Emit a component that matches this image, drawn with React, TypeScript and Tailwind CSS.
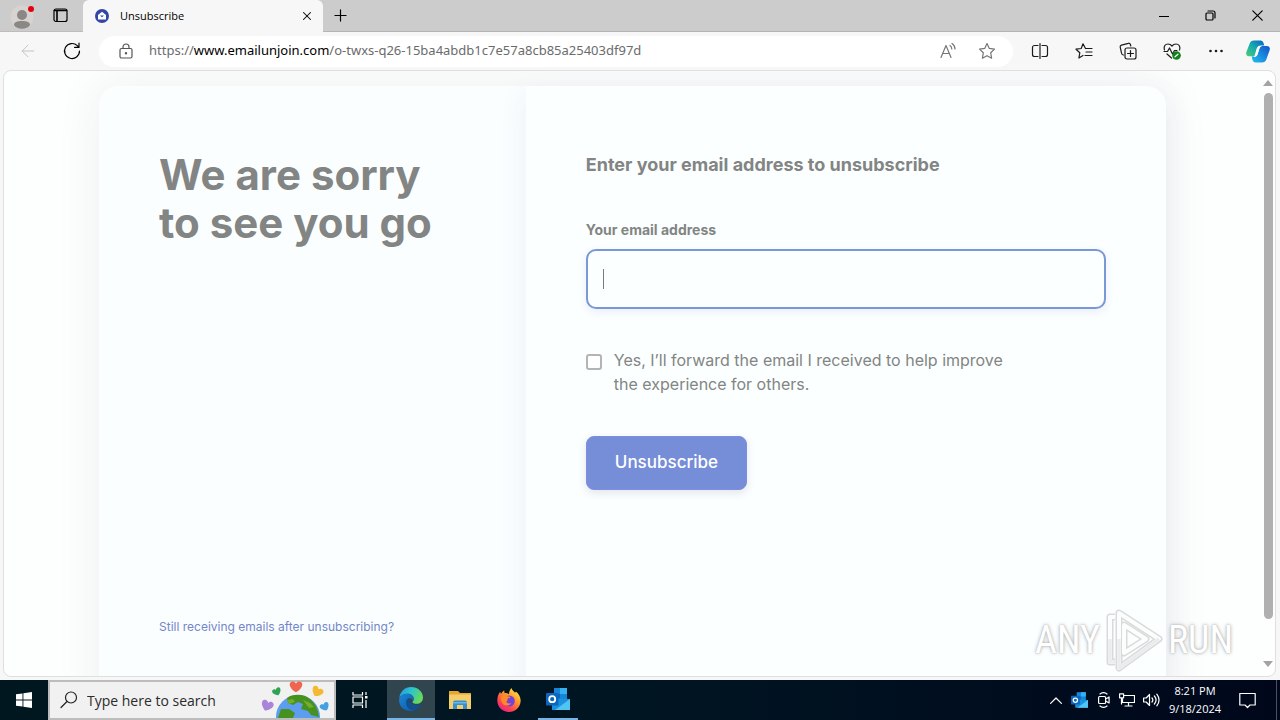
import React from "react";
import { ArrowLeft, Plus, X } from "lucide-react";

const iconProps = {
  fill: "none",
  stroke: "currentColor",
  strokeWidth: 1.2,
  strokeLinecap: "round" as const,
  strokeLinejoin: "round" as const,
  "aria-hidden": true,
};

function Svg({ className, box = "0 0 18 18", children }: { className: string; box?: string; children: React.ReactNode }) {
  return (
    <svg viewBox={box} className={className} {...iconProps}>
      {children}
    </svg>
  );
}

function ProfileIcon() {
  return (
    <svg viewBox="0 0 24 26" className="h-[26px] w-6" aria-hidden="true">
      <circle cx="12" cy="14" r="11.5" fill="#d6d3d1" />
      <circle cx="12" cy="12" r="5" fill="#8b8785" />
      <path d="M4 22c0-3 3-4 8-4s8 1 8 4c-1.500 2.600-4.500 3.800-8 3.800s-6.500-1.200-8-3.800z" fill="#8b8785" />
      <circle cx="21" cy="6" r="3" fill="#e3000f" />
    </svg>
  );
}

function Favicon() {
  return (
    <svg viewBox="0 0 14 14" className="size-[14px]" aria-hidden="true">
      <circle cx="7" cy="7" r="7" fill="#3346a8" />
      <path d="M3 6l4-3.200L11 6v4.500H3z" fill="#fff" />
      <path d="M5 6.500h4L7 8.200z" fill="#3346a8" />
    </svg>
  );
}

function CopilotIcon() {
  return (
    <svg viewBox="0 0 24 22" className="h-[23px] w-6" aria-hidden="true">
      <defs>
        <linearGradient id="cpA" x1="0" y1="1" x2="1" y2="0">
          <stop offset="0" stopColor="#4ccf72" />
          <stop offset="0.5" stopColor="#16a9b0" />
          <stop offset="1" stopColor="#0a62c4" />
        </linearGradient>
        <linearGradient id="cpB" x1="0" y1="1" x2="1" y2="0">
          <stop offset="0" stopColor="#1fc0f0" />
          <stop offset="1" stopColor="#1352c9" />
        </linearGradient>
      </defs>
      <path d="M8 0h6.500c1.600 0 2.500 1 3 2.500l.8 2.500h-3.600c-1.600 0-2.500.8-3 2.400l-1.800 6c-.5 1.500-1.400 2.400-3 2.400H3.200C.8 15.800-.3 14 .3 11.700L3.700 3C4.400 1 5.800 0 8 0z" fill="url(#cpA)" />
      <path d="M16 22H9.500c-1.600 0-2.500-1-3-2.500L5.700 16h3c1.600 0 2.500-.8 3-2.400l1.800-5.800c.5-1.500 1.400-2.400 3-2.400h4.300c2.400 0 3.500 1.800 2.900 4.100L20.300 19c-.7 2-2.100 3-4.300 3z" fill="url(#cpB)" />
      <path d="M10.500 8.500c.6-2 1.700-3 3.700-3h1.300c-1.300.5-1.700 1.400-2.100 2.600l-1.900 6c-.5 1.400-1.500 2.300-3 2.300H7.300c.9-.4 1.200-1 1.500-2z" fill="#fff" />
    </svg>
  );
}

function TabBar() {
  return (
    <header className="flex h-8 shrink-0 items-stretch bg-[#cccccc] text-black">
      <div className="flex w-[83px] items-center border-b border-[#bdbdbd] pl-[10px]">
        <button aria-label="Profile"><ProfileIcon /></button>
        <button aria-label="Tab actions" className="ml-[19px]">
          <Svg className="size-[15px]" box="0 0 15 15">
            <rect x="1" y="1" width="13" height="12.500" rx="2" />
            <path d="M1.500 2.500h12M4 3v10" strokeWidth="1.600" />
          </Svg>
        </button>
      </div>
      <div className="flex w-[240px] items-center rounded-t-md bg-[#f7f7f7] pr-[9px] pl-3">
        <Favicon />
        <span className="ml-[11px] flex-1 text-[11px]">Unsubscribe</span>
        <button aria-label="Close tab"><X className="size-[14px]" strokeWidth={1.800} /></button>
      </div>
      <div className="flex flex-1 items-center border-b border-[#b5b5b5] pl-2">
        <button aria-label="New tab"><Plus className="size-[19px]" strokeWidth={1.500} /></button>
        <div className="ml-auto flex items-center gap-9 pr-[17px]">
          <button aria-label="Minimize"><Svg className="size-[10px]" box="0 0 10 10"><path d="M0 5.500h10" strokeWidth="1" /></Svg></button>
          <button aria-label="Restore">
            <Svg className="size-[11px]" box="0 0 11 11">
              <rect x="1" y="3" width="7" height="7" rx="1" />
              <path d="M3 1h5a2 2 0 0 1 2 2v5" />
            </Svg>
          </button>
          <button aria-label="Close window"><Svg className="size-[11px]" box="0 0 11 11"><path d="M.8.8l9.400 9.400M10.200.8L.8 10.200" /></Svg></button>
        </div>
      </div>
    </header>
  );
}

const starPath = "M9 1.500l2.300 4.900 5.200.7-3.800 3.700.9 5.400L9 13.700l-4.600 2.500.9-5.400L1.500 7.100l5.200-.7z";

function Toolbar() {
  return (
    <nav className="flex h-[38px] shrink-0 items-center bg-[#f7f7f7] pr-[10px] pl-[18px]">
      <button aria-label="Back" className="text-[#c4c4c4]">
        <ArrowLeft className="size-5" strokeWidth={1.200} />
      </button>
      <button aria-label="Refresh" className="ml-6">
        <Svg className="size-5" box="0 0 20 20">
          <path d="M17.500 10a7.500 7.500 0 1 1-2.200-5.300L17 6.400M17 2v4.400h-4.400" />
        </Svg>
      </button>
      <div className="ml-[17px] flex h-[31px] min-w-0 flex-1 items-center rounded-full bg-white pr-[17px] pl-[19px]">
        <Svg className="size-4 shrink-0 text-[#555555]" box="0 0 16 16">
          <rect x="2" y="5.500" width="12" height="9.500" rx="1.500" />
          <path d="M5 5.500V4a3 3 0 0 1 6 0v1.500" />
          <circle cx="8" cy="10.300" r=".6" fill="currentColor" />
        </Svg>
        <span className="ml-[15px] flex-1 truncate font-['Noto_Sans',sans-serif] text-[13px] text-[#6b6b6b]">
          https://<span className="text-black">www.emailunjoin.com</span>/o-twxs-q26-15ba4abdb1c7e57a8cb85a25403df97d
        </span>
        <button aria-label="Read aloud" className="text-[#767676]">
          <Svg className="size-[18px]">
            <path d="M2 15.500L7 3.500l5 12M3.800 11.500h6.400M11 3.500c1.200.8 1.800 2 1.800 3.500M13 1.500c1.900 1.300 3 3.200 3 5.500" />
          </Svg>
        </button>
        <button aria-label="Add to favorites" className="ml-[21px] text-[#767676]"><Svg className="size-[18px]"><path d={starPath} /></Svg></button>
      </div>
      <div className="ml-[18px] flex items-center gap-[26px] text-[#1b1b1b]">
        <button aria-label="Split screen">
          <Svg className="size-[18px]"><path d="M7 3.500H3.500a2 2 0 0 0-2 2v7a2 2 0 0 0 2 2H7M9 1.500v15M11 3.500h3.500a2 2 0 0 1 2 2v7a2 2 0 0 1-2 2H11" /></Svg>
        </button>
        <button aria-label="Favorites">
          <Svg className="size-[18px]"><path d="M10.500 6.500L8 1.800 6.200 6.500l-5.200.7 3.800 3.600-.9 5.200L8 13.500M10.500 6.500H17M11 10h6M10 13.500h7" /></Svg>
        </button>
        <button aria-label="Collections">
          <Svg className="size-[18px]">
            <rect x="6" y="6" width="11" height="11" rx="2" />
            <path d="M11.500 8.500v6M8.500 11.500h6M4.500 13c-1 0-1.600-.6-1.900-1.600L1.200 5.200c-.2-1 .3-1.800 1.300-2.100l6.800-1.800c1-.3 1.800.2 2.100 1.200l.4 1.500" />
          </Svg>
        </button>
        <button aria-label="Browser essentials">
          <Svg className="size-[18px]">
            <path d="M1.500 8C.3 4 2.500 2 5 2c1.800 0 3 .8 4 2 1-1.200 2.200-2 4-2 2.500 0 4.700 2 3.500 6M1 9.500h3.500L6.500 6l3 6 2-3.500H14M4 12l4.500 4" />
            <circle cx="13.500" cy="13.500" r="4" fill="#13801c" stroke="#13801c" strokeWidth=".5" />
            <path d="M12 14.800l3-2.600" stroke="#fff" />
          </Svg>
        </button>
        <button aria-label="Settings and more">
          <Svg className="size-[18px]">
            <circle cx="3.500" cy="9" r="1.300" fill="currentColor" stroke="none" />
            <circle cx="9" cy="9" r="1.300" fill="currentColor" stroke="none" />
            <circle cx="14.500" cy="9" r="1.300" fill="currentColor" stroke="none" />
          </Svg>
        </button>
      </div>
      <button aria-label="Copilot" className="ml-[21px]"><CopilotIcon /></button>
    </nav>
  );
}

function Watermark() {
  return (
    <div className="absolute right-[42px] bottom-1 flex items-center gap-1 font-['Roboto_Condensed','Liberation_Sans_Narrow','Liberation_Sans',sans-serif] text-[38px] leading-none text-white [text-shadow:0_0_2px_#b0b0b0,0_0_4px_#bcbcbc]">
      <span>ANY</span>
      <svg viewBox="0 0 60 64" className="h-16 w-[60px]" fill="none" strokeLinejoin="round" aria-hidden="true">
        <g stroke="#d9dbdb" strokeWidth="7">
          <path d="M11 54H6V9h5M15 5l40 26-40 29z" />
          <path d="M20 17l22 14-22 14z" />
        </g>
        <g stroke="#fcfdfd" strokeWidth="4">
          <path d="M11 54H6V9h5M15 5l40 26-40 29z" />
          <path d="M20 17l22 14-22 14z" />
        </g>
        <path d="M15 31v29l40-29M6 31v23h5" stroke="#ebeded" strokeWidth="3.500" />
      </svg>
      <span>RUN</span>
    </div>
  );
}

function UnsubscribeCard() {
  return (
    <main className="mx-auto grid min-h-[640px] w-full max-w-[1067px] grid-cols-[2fr_3fr] rounded-t-[20px] font-[Inter,sans-serif] text-[#828583] shadow-[0_0_48px_rgba(40,40,90,0.07)]">
      <section className="flex flex-col rounded-tl-[20px] bg-[#fbfeff] px-[60px] pt-[65px]">
        <h1 className="text-[42px] leading-[48px] font-bold">We are sorry<br />to see you go</h1>
        <a href="#help" className="mt-[372px] text-[12px] leading-4 text-[#7387c8]">Still receiving emails after unsubscribing?</a>
      </section>
      <section className="rounded-tr-[20px] bg-[#fcffff] px-[60px] pt-[67px] shadow-[0_8px_30px_rgba(50,60,130,0.07)]">
        <h2 className="text-[18px] leading-6 font-bold">Enter your email address to unsubscribe</h2>
        <form onSubmit={(e) => e.preventDefault()}>
          <label htmlFor="email" className="mt-[43px] block text-[14px] leading-5 font-bold">Your email address</label>
          <div className="relative mt-[9px]">
            <input id="email" type="email" className="block h-[60px] w-full rounded-[10px] border-2 border-[#7b98d6] bg-[#fcffff] px-4 text-base caret-transparent shadow-[0_3px_8px_rgba(80,80,200,0.1)] outline-none" />
            <span className="absolute top-5 left-[17px] h-5 w-px bg-[#777b7a]" />
          </div>
          <div className="mt-[39px] flex gap-3">
            <input id="forward" type="checkbox" className="mt-[6px] size-4 shrink-0 appearance-none rounded-[3px] border-2 border-[#b3b5b4] bg-white" />
            <label htmlFor="forward" className="max-w-[410px] text-[16px] leading-6">Yes, I’ll forward the email I received to help improve the experience for others.</label>
          </div>
          <button className="mt-10 h-[54px] rounded-lg border border-[#7c8de2] bg-[#768dd8] px-7 text-[17px] font-medium text-white shadow-[0_3px_8px_rgba(40,40,90,0.12)]">Unsubscribe</button>
        </form>
      </section>
    </main>
  );
}

function Scrollbar() {
  return (
    <div className="flex w-[14px] shrink-0 flex-col items-center pt-[9px] pb-[9px]">
      <svg viewBox="0 0 10 6" className="h-[6px] w-[10px]" aria-hidden="true"><path d="M0 6L5 0l5 6z" fill="#a3a3a3" /></svg>
      <div className="mt-[7px] mb-[42px] w-[9px] flex-1 rounded-full bg-[#b0b0b0]" />
      <svg viewBox="0 0 10 6" className="h-[6px] w-[10px]" aria-hidden="true"><path d="M0 0h10L5 6z" fill="#a3a3a3" /></svg>
    </div>
  );
}

function GlobeHearts() {
  const heart = "M0 4.500C-3 3-5.500 0-5.500-2.200-5.500-5-1.500-6 0-3 1.500-6 5.500-5 5.500-2.200 5.500 0 3 3 0 4.500z";
  return (
    <svg viewBox="0 0 72 38" className="h-[38px] w-[72px]" aria-hidden="true">
      <circle cx="37" cy="37" r="22" fill="#5d9df0" />
      <path d="M26 18c6-5 18-4 23 1 6 5 8 11 9 18l-8-2-3-4-7-2 2-5-5-2-5 3-5-2z" fill="#47911f" />
      <path d="M20 29l8 0 6 4-2 5H17z" fill="#47911f" />
      <path d="M26 20l6-1 2 3-6 2zM42 20l7 3 4 4-5 1z" fill="#75ad2c" />
      <path d={heart} transform="translate(35 7) scale(1.150)" fill="#ef6550" />
      <path d={heart} transform="translate(16 12) rotate(-25) scale(.8)" fill="#2fa354" />
      <path d={heart} transform="translate(56 12) rotate(30) scale(1.050)" fill="#f5b931" />
      <path d={heart} transform="translate(6 26) rotate(20) scale(1.100)" fill="#a985da" />
      <path d={heart} transform="translate(64 27) rotate(-30) scale(.85)" fill="#45a0e2" />
    </svg>
  );
}

function EdgeLogo() {
  return (
    <svg viewBox="0 0 24 24" className="size-6" aria-hidden="true">
      <defs>
        <linearGradient id="edA" x1="0" y1="0" x2="1" y2=".4">
          <stop offset="0" stopColor="#2493dc" /><stop offset=".5" stopColor="#2cc3d0" /><stop offset="1" stopColor="#66d95c" />
        </linearGradient>
        <linearGradient id="edB" x1="0" y1="0" x2="1" y2="1">
          <stop offset="0" stopColor="#1b86d8" /><stop offset="1" stopColor="#0c5aa8" />
        </linearGradient>
      </defs>
      <path d="M.3 11C1 4.500 6 0 12 0c7 0 12 5 12 10.500 0 4-3 6.300-6.300 6.300-2.700 0-4.200-.9-4.200-1.800 0-.7 1.200-1.200 1.200-3.300 0-2.700-2.700-5-6.200-5C4.500 6.700 1.500 8.500.3 11z" fill="url(#edA)" />
      <path d="M.1 12.500C.5 9 4 6.700 8.500 6.700c3.500 0 6.200 2.300 6.200 5 0 1-.4 1.700-.7 2.200-.6-1.700-2-2.600-3.500-2.600-2 0-3.300 2-3.300 4.300 0 4 3.300 7.500 8 7.800-1 .4-2.200.6-3.400.6C5 24-.3 19 .1 12.500z" fill="url(#edB)" />
      <path d="M10 11.300c-1.700.2-2.800 2.100-2.800 4.300 0 4 3.300 7.500 8 7.800 3-.9 5.500-3 6.900-5.600.3-.6-.2-.9-.7-.6-5 2.500-11.400-.2-11.400-5.900z" fill="#124f91" />
    </svg>
  );
}

function FolderLogo() {
  return (
    <svg viewBox="0 0 22 20" className="h-5 w-[22px]" aria-hidden="true">
      <path d="M0 1h9l2 2h11v16H0z" fill="#e9a52e" />
      <path d="M0 4.500h22V19H0z" fill="#f5ce6a" />
      <path d="M4 19v-6.500a2 2 0 0 1 2-2h10a2 2 0 0 1 2 2V19h-4v-4H8v4z" fill="#3a8fd0" />
      <path d="M4 12h14v1.500H4z" fill="#67b6e8" />
    </svg>
  );
}

function FirefoxLogo() {
  return (
    <svg viewBox="0 0 24 24" className="size-6" aria-hidden="true">
      <defs>
        <linearGradient id="ff" x1=".9" y1="0" x2=".2" y2="1">
          <stop offset="0" stopColor="#fff44f" /><stop offset=".4" stopColor="#ff9a2b" /><stop offset=".75" stopColor="#ff3f54" /><stop offset="1" stopColor="#e2208c" />
        </linearGradient>
      </defs>
      <path d="M14.500 0c.3 2 2 3 3.600 4.700.6-.4.700-1.200.7-1.200C22 6 24 9.500 23.600 13.500 23 19.500 18.200 24 12 24 5.400 24 .3 19 .3 12.500c0-3.700 1.200-6.700 2.900-8.700L4 6c.7-1.200 2-3 3.200-3.500L7.500 5c2 0 3.400.4 4.500 1.300C12 4 13 1.500 14.500 0z" fill="url(#ff)" />
      <circle cx="12.300" cy="13" r="5.500" fill="#7542d5" />
      <path d="M4.500 8c2-1.300 4.500-1 5.500.3 1.500-.2 3 .3 3.500 1-1 .8-2.500.7-3 1.800-.3 1 .3 2-1.200 2.700 1 1.800 3.300 2.200 5 1.200-1.800 3.500-7.800 3.500-9.600-1C4 12 3.800 10 4.500 8z" fill="#ff8a28" />
    </svg>
  );
}

function OutlookLogo({ className }: { className: string }) {
  return (
    <svg viewBox="0 0 24 22" className={className} aria-hidden="true">
      <path d="M8 0h13v12H8z" fill="#1684d8" />
      <path d="M14 0h7v6h-7z" fill="#35b0f0" />
      <path d="M8 6h6v6H8z" fill="#0f64b8" />
      <path d="M6 10l18 1v11H6z" fill="#1b91dd" />
      <path d="M24 11v11H9z" fill="#50c5f4" />
      <rect y="5" width="12.500" height="12.500" rx="1" fill="#0b66bd" />
      <circle cx="6.200" cy="11.200" r="3" fill="none" stroke="#fff" strokeWidth="1.800" />
    </svg>
  );
}

function Taskbar() {
  return (
    <footer className="flex h-10 shrink-0 items-stretch bg-linear-to-r from-[#001720] via-[#001522] to-[#00071b] text-white">
      <button aria-label="Start" className="flex w-12 items-center justify-center">
        <svg viewBox="0 0 16 16" className="size-4" fill="#fff" aria-hidden="true"><path d="M0 2.300L6.500 1.400v6.200H0zM7.400 1.300L16 0v7.600H7.400zM0 8.400h6.500v6.200L0 13.700zM7.400 8.400H16V16l-8.600-1.300z" /></svg>
      </button>
      <div className="flex w-72 items-center border-2 border-[#bcbcbc] bg-[#f1f1f1] pl-[10px] text-[#222222]">
        <Svg className="size-[18px] shrink-0"><circle cx="11" cy="6.500" r="5.500" /><path d="M7 10.500L1 16.500" /></Svg>
        <input type="text" aria-label="Search" placeholder="Type here to search" className="ml-[9px] w-0 min-w-0 flex-1 bg-transparent text-[14px] outline-none placeholder:text-[#2b2b2b]" />
        <span className="mr-px self-end"><GlobeHearts /></span>
      </div>
      <button aria-label="Task view" className="flex w-[51px] items-center justify-center pr-1">
        <Svg className="size-4" box="0 0 16 16">
          <path d="M1 0v3h9.500V0M1 16v-3h9.500v3M1 5h9.500v6H1zM14 0v3M14 8v8" strokeLinecap="butt" />
          <path d="M13 4h2.500v2.500H13z" fill="currentColor" stroke="none" />
        </Svg>
      </button>
      <button aria-label="Microsoft Edge" className="flex w-12 items-center justify-center border-b-2 border-[#78b4e6] bg-[#31454e]"><EdgeLogo /></button>
      <button aria-label="File Explorer" className="flex w-[50px] items-center justify-center"><FolderLogo /></button>
      <button aria-label="Firefox" className="flex w-12 items-center justify-center"><FirefoxLogo /></button>
      <button aria-label="Outlook" className="ml-[5px] flex w-10 items-center justify-center border-b-2 border-[#78b4e6]"><OutlookLogo className="h-[22px] w-6" /></button>
      <div className="ml-auto flex items-center">
        <button aria-label="Show hidden icons"><Svg className="h-[7px] w-3" box="0 0 12 7"><path d="M.6 6.400L6 1l5.400 5.400" /></Svg></button>
        <OutlookLogo className="ml-[9px] h-4 w-[17px]" />
        <Svg className="ml-[10px] h-4 w-3" box="0 0 12 16"><rect x=".6" y="4.500" width="7" height="7" rx="1" /><path d="M7.600 7l3.500-2v6l-3.500-2M2 2c2-1.600 5-1.600 7 0M2 14c2 1.600 5 1.600 7 0" /></Svg>
        <Svg className="ml-[9px] h-[14px] w-4" box="0 0 16 14"><path d="M5.500 2.500h10v7H3.500V6M9.500 9.500v3M6 13h7M.6.800h4v4h-4zM2.500 5v6" /></Svg>
        <Svg className="ml-2 h-[14px] w-[17px]" box="0 0 17 14"><path d="M.6 5h2.600L6.500 1.500v11L3.200 9H.6zM9 5c1 1.200 1 2.800 0 4M11.400 3c2 2.400 2 5.600 0 8M13.800 1.200c2.800 3.600 2.800 8 0 11.600" /></Svg>
        <div className="ml-2 w-[54px] text-center text-[11px] leading-[18px]">8:21 PM<br />9/18/2024</div>
        <button aria-label="Notifications" className="mr-5 ml-[17px]"><Svg className="h-[17px] w-[17px]" box="0 0 17 17"><path d="M.8 1.500h15.400v11.500H11L8.500 15.500 6 13H.8z" /></Svg></button>
        <div className="h-full w-1 border-l border-[#4a5260]" />
      </div>
    </footer>
  );
}

export default function App() {
  return (
    <div className="flex h-screen flex-col overflow-hidden bg-[#f7f7f7] font-['Open_Sans','Noto_Sans',sans-serif]">
      <TabBar />
      <Toolbar />
      <div className="relative mr-1 mb-[3px] ml-[3px] flex min-h-0 flex-1 overflow-hidden rounded-lg border border-[#dfdfdf] bg-[#fdfffe]">
        <div className="min-w-0 flex-1 overflow-hidden pt-[15px]"><UnsubscribeCard /></div>
        <Scrollbar />
        <Watermark />
      </div>
      <Taskbar />
    </div>
  );
}
